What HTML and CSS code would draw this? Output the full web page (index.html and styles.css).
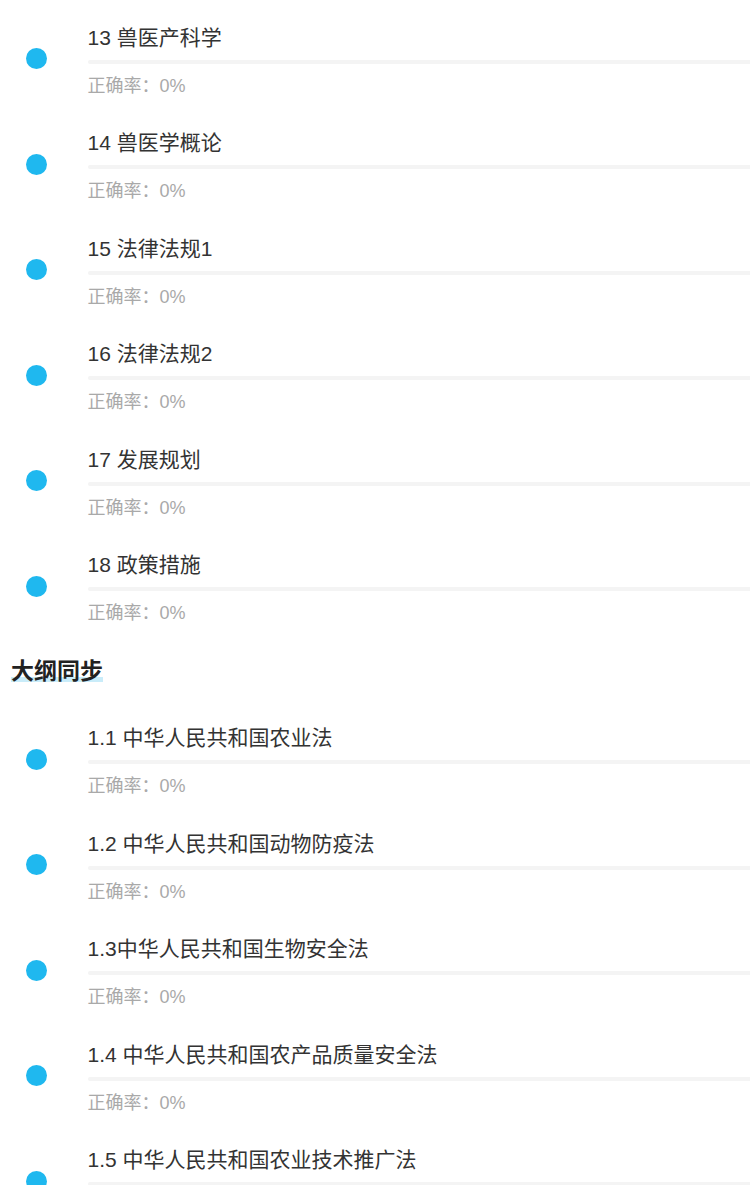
FILE: index.html
```html
<!DOCTYPE html>
<html lang="zh-CN">
<head>
  <meta charset="UTF-8">
  <meta name="viewport" content="width=device-width, initial-scale=1.0">
  <title>章节练习</title>
  <link rel="stylesheet" href="styles.css">
</head>
<body>
  <!-- Chapter list -->
  <ul class="chapter-list first">
    <li class="chapter">
      <span class="dot"></span>
      <div class="chapter-body">
        <div class="chapter-title">13 兽医产科学</div>
        <div class="chapter-bar"></div>
        <div class="chapter-rate">正确率：0%</div>
      </div>
    </li>
    <li class="chapter">
      <span class="dot"></span>
      <div class="chapter-body">
        <div class="chapter-title">14 兽医学概论</div>
        <div class="chapter-bar"></div>
        <div class="chapter-rate">正确率：0%</div>
      </div>
    </li>
    <li class="chapter">
      <span class="dot"></span>
      <div class="chapter-body">
        <div class="chapter-title">15 法律法规1</div>
        <div class="chapter-bar"></div>
        <div class="chapter-rate">正确率：0%</div>
      </div>
    </li>
    <li class="chapter">
      <span class="dot"></span>
      <div class="chapter-body">
        <div class="chapter-title">16 法律法规2</div>
        <div class="chapter-bar"></div>
        <div class="chapter-rate">正确率：0%</div>
      </div>
    </li>
    <li class="chapter">
      <span class="dot"></span>
      <div class="chapter-body">
        <div class="chapter-title">17 发展规划</div>
        <div class="chapter-bar"></div>
        <div class="chapter-rate">正确率：0%</div>
      </div>
    </li>
    <li class="chapter">
      <span class="dot"></span>
      <div class="chapter-body">
        <div class="chapter-title">18 政策措施</div>
        <div class="chapter-bar"></div>
        <div class="chapter-rate">正确率：0%</div>
      </div>
    </li>
  </ul>

  <!-- Section title -->
  <h3 class="section-title"><span>大纲同步</span></h3>

  <ul class="chapter-list">
    <li class="chapter">
      <span class="dot"></span>
      <div class="chapter-body">
        <div class="chapter-title">1.1 中华人民共和国农业法</div>
        <div class="chapter-bar"></div>
        <div class="chapter-rate">正确率：0%</div>
      </div>
    </li>
    <li class="chapter">
      <span class="dot"></span>
      <div class="chapter-body">
        <div class="chapter-title">1.2 中华人民共和国动物防疫法</div>
        <div class="chapter-bar"></div>
        <div class="chapter-rate">正确率：0%</div>
      </div>
    </li>
    <li class="chapter">
      <span class="dot"></span>
      <div class="chapter-body">
        <div class="chapter-title">1.3中华人民共和国生物安全法</div>
        <div class="chapter-bar"></div>
        <div class="chapter-rate">正确率：0%</div>
      </div>
    </li>
    <li class="chapter">
      <span class="dot"></span>
      <div class="chapter-body">
        <div class="chapter-title">1.4 中华人民共和国农产品质量安全法</div>
        <div class="chapter-bar"></div>
        <div class="chapter-rate">正确率：0%</div>
      </div>
    </li>
    <li class="chapter">
      <span class="dot"></span>
      <div class="chapter-body">
        <div class="chapter-title">1.5 中华人民共和国农业技术推广法</div>
        <div class="chapter-bar"></div>
        <div class="chapter-rate">正确率：0%</div>
      </div>
    </li>
  </ul>
</body>
</html>
```

FILE: styles.css
```css
/* General */
body {
  margin: 0;
  background: #fff;
  font-family: "Liberation Sans", "Noto Sans CJK SC", sans-serif;
  color: #333;
  overflow: hidden;
}

/* Chapter list */
.chapter-list {
  list-style: none;
  margin: 0;
  padding: 0;
}

.chapter-list.first {
  padding-top: 12.5px;
}

.chapter {
  display: flex;
  align-items: flex-start;
  padding: 10px 0 17.5px;
}

.dot {
  flex: none;
  width: 21px;
  height: 21px;
  margin: 25.5px 41px 0 25.5px;
  border-radius: 50%;
  background: #1fb8ef;
}

.chapter-body {
  flex: 1;
  min-width: 0;
}

.chapter-title {
  font-size: 21px;
  line-height: 30px;
  color: #333;
  white-space: nowrap;
}

.chapter-bar {
  height: 4px;
  margin-top: 7px;
  border-radius: 2px 0 0 2px;
  background: #f4f4f4;
}

.chapter-rate {
  margin-top: 7px;
  font-size: 18px;
  line-height: 30px;
  color: #a9a9a9;
}

/* Section title */
.section-title {
  margin: 10.5px 0 27px 11px;
  font-size: 23px;
  line-height: 30px;
  font-weight: bold;
  color: #222;
}

.section-title span {
  display: inline-block;
  background: linear-gradient(to bottom, transparent 21px, #c9ecf9 21px, #c9ecf9 26px, transparent 26px);
  border-radius: 3px;
}
```
